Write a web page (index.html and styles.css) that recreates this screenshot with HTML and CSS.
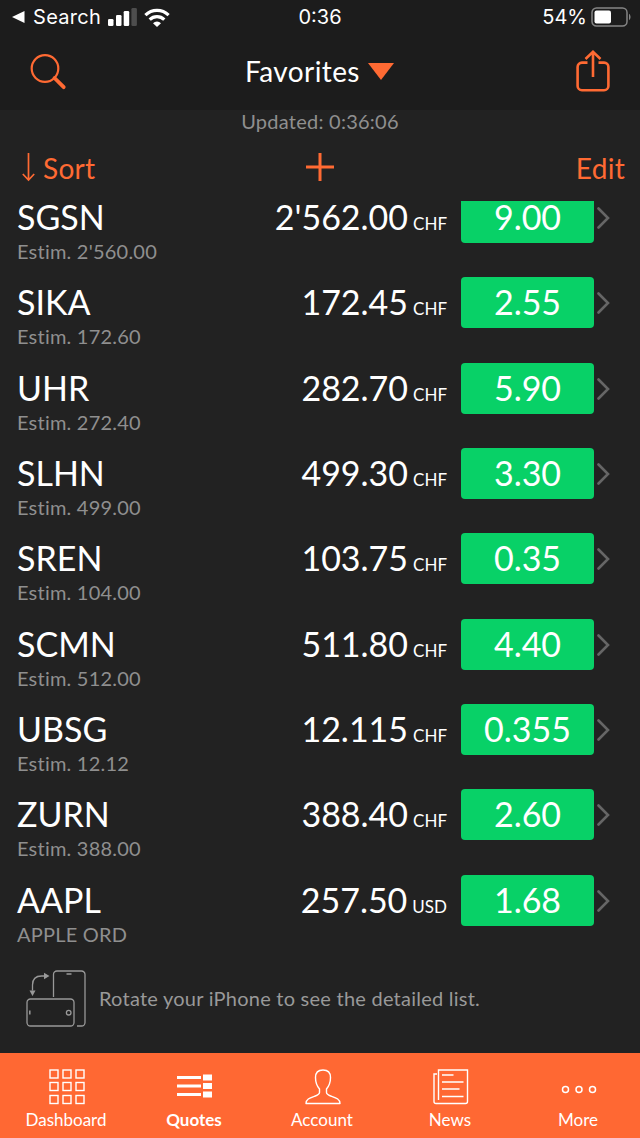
FILE: index.html
```html
<!DOCTYPE html>
<html lang="en">
<head>
  <meta charset="utf-8">
  <title>Favorites</title>
  <link rel="stylesheet" href="styles.css">
</head>
<body>
  <header class="top">
    <div class="status">
      <div class="status-left">
        <svg width="13" height="14" viewBox="0 0 13 14"><path d="M12.5 1v12L0 7z" fill="#fff"/></svg>
        <span class="back-app">Search</span>
        <svg class="signal" width="29" height="18" viewBox="0 0 29 18">
          <g fill="#fff">
            <rect x="0" y="11" width="5.5" height="7" rx="1.3"/>
            <rect x="8" y="7" width="5.5" height="11" rx="1.3"/>
            <rect x="15.7" y="3" width="5.5" height="15" rx="1.3"/>
          </g>
          <rect x="23.4" y="0" width="5.5" height="18" rx="1.3" fill="#4d4d4d"/>
        </svg>
        <svg class="wifi" width="26" height="19" viewBox="0 0 26 19" fill="none" stroke="#fff" stroke-width="3.2">
          <path d="M1.4 7.2a16.6 16.6 0 0 1 23.2 0"/>
          <path d="M5.7 11.6a10.4 10.4 0 0 1 14.6 0"/>
          <path d="M9 15.2a5.8 5.8 0 0 1 8 0l-4 3.8z" fill="#fff" stroke="none"/>
        </svg>
      </div>
      <span class="clock">0:36</span>
      <div class="status-right">
        <span class="percent">54%</span>
        <svg width="38" height="20" viewBox="0 0 38 20">
          <rect x="1" y="1" width="35" height="18" rx="4.5" fill="none" stroke="#858585" stroke-width="1.5"/>
          <rect x="3.5" y="3.5" width="16.5" height="13" rx="2" fill="#fff"/>
        </svg>
        <svg class="battery-tip" width="2" height="8" viewBox="0 0 2 8"><path d="M0 .8c2 1.400 2 5 0 6.400z" fill="#858585"/></svg>
      </div>
    </div>
    <nav class="navbar">
      <svg width="37" height="37" viewBox="0 0 37 37" fill="none" stroke="#ff6a33">
        <circle cx="15" cy="14.500" r="13.300" stroke-width="2.200"/>
        <path d="M24.500 24l9.200 9.200" stroke-width="3.800" stroke-linecap="round"/>
      </svg>
      <div class="title">
        <span>Favorites</span>
        <svg width="26" height="17" viewBox="0 0 26 17"><path d="M0 0h26L13 17z" fill="#ff6a33"/></svg>
      </div>
      <svg class="share" width="34" height="42" viewBox="0 0 34 42" fill="none" stroke="#ff6a33" stroke-width="2.600">
        <path d="M11.500 12.600H6a4.300 4.300 0 0 0-4.400 4.300v19a4.300 4.300 0 0 0 4.300 4.300h22.200a4.300 4.300 0 0 0 4.300-4.300v-19a4.300 4.300 0 0 0-4.300-4.300h-5.600"/>
        <path d="M17 27V2M9.500 9L17 1.800 24.500 9"/>
      </svg>
    </nav>
  </header>

  <div class="updated">Updated: 0:36:06</div>
  <div class="toolbar">
    <a class="sort">
      <svg width="13" height="29" viewBox="0 0 13 29" fill="none" stroke="#ff6a33" stroke-width="1.700"><path d="M6.500 0v27M.8 21l5.700 6 5.700-6"/></svg>
      <span>Sort</span>
    </a>
    <svg class="add" width="28" height="28" viewBox="0 0 28 28"><path d="M14 0v28M0 14h28" stroke="#ff6a33" stroke-width="3"/></svg>
    <a class="edit">Edit</a>
  </div>

  <main class="quotes">
    <ul class="list" id="list"></ul>
  </main>

  <div class="hint">
    <svg width="60" height="58" viewBox="0 0 60 58" fill="none" stroke="#999" stroke-width="1.300">
      <path d="M27.500 27V4.500a3.500 3.500 0 0 1 3.500-3.500h24.500a3.500 3.500 0 0 1 3.500 3.500v48a3.500 3.500 0 0 1-3.500 3.500H51"/>
      <rect x="1" y="29" width="47" height="27" rx="3.500"/>
      <path d="M40.500 4h5M3.800 40.500v4" stroke-width="1.500"/>
      <circle cx="42.700" cy="42.700" r="2.300"/>
      <path d="M6.500 20.500V15c0-6 3.500-9 9-9H18"/>
      <path d="M3.500 20.500h6L6.500 26zM18 2.800v6.400L23.500 6z" fill="#999" stroke="none"/>
    </svg>
    <span>Rotate your iPhone to see the detailed list.</span>
  </div>

  <footer class="tabs">
    <a class="tab">
      <svg width="36" height="36" viewBox="0 0 36 36" fill="none" stroke="#fff" stroke-width="1.400">
        <rect x="1" y="1" width="8" height="8"/><rect x="14" y="1" width="8" height="8"/><rect x="27" y="1" width="8" height="8"/>
        <rect x="1" y="13.500" width="8" height="8"/><rect x="14" y="13.500" width="8" height="8"/><rect x="27" y="13.500" width="8" height="8"/>
        <rect x="1" y="26.500" width="8" height="8"/><rect x="14" y="26.500" width="8" height="8"/><rect x="27" y="26.500" width="8" height="8"/>
      </svg>
      <span>Dashboard</span>
    </a>
    <a class="tab active">
      <svg width="36" height="36" viewBox="0 0 36 36" fill="#fff">
        <path d="M0 7h24v3H0zM0 15.500h24v3H0zM0 24h24v3H0zM26 5.500h9v6h-9zM26 14h9v6h-9zM26 22.500h9v6h-9z"/>
      </svg>
      <span>Quotes</span>
    </a>
    <a class="tab">
      <svg width="36" height="36" viewBox="0 0 36 36" fill="none" stroke="#fff" stroke-width="1.400" stroke-linejoin="round">
        <path d="M18 1c-5 0-7.500 3-7.500 7.500 0 5 1 8 4 11.500v3.500c0 2-2 2.700-5 3.800-5 1.800-8.500 3-8.500 7.200h34c0-4.200-3.500-5.400-8.500-7.200-3-1.100-5-1.800-5-3.800V20c3-3.500 4-6.500 4-11.500C25.500 4 23 1 18 1z"/>
      </svg>
      <span>Account</span>
    </a>
    <a class="tab">
      <svg width="36" height="36" viewBox="0 0 36 36" fill="none" stroke="#fff" stroke-width="1.400">
        <path d="M5.500 31V1h29v31.500c0 1.300-.7 2-2 2H3c-1.300 0-2-.7-2-2V5h3"/>
        <path d="M9 6h11.500M9 13h21.500M9 20h17.500M9 27.500h21.500"/>
      </svg>
      <span>News</span>
    </a>
    <a class="tab">
      <svg width="36" height="36" viewBox="0 0 36 36" fill="none" stroke="#fff" stroke-width="1.500">
        <circle cx="4.500" cy="20.500" r="3"/><circle cx="18" cy="20.500" r="3"/><circle cx="31.500" cy="20.500" r="3"/>
      </svg>
      <span>More</span>
    </a>
  </footer>

  <script src="script.js"></script>
</body>
</html>
```

FILE: styles.css
```css
* {
  box-sizing: border-box;
}
body {
  margin: 0;
  width: 640px;
  height: 1138px;
  display: flex;
  flex-direction: column;
  overflow: hidden;
  background: #222;
  color: #fff;
  font-family: Lato, sans-serif;
}
svg {
  display: block;
  flex: none;
}
.top {
  height: 110px;
  flex: none;
  background: #1c1c1c;
}

/* status bar */
.status {
  height: 34px;
  display: grid;
  grid-template-columns: 1fr auto 1fr;
  align-items: center;
  padding: 0 9px 0 12px;
  font: 20px/34px Inter, sans-serif;
}
.status-left,
.status-right {
  display: flex;
  align-items: center;
}
.status-right {
  justify-content: flex-end;
  gap: 4px;
}
.clock {
  margin-right: 3px;
}
.battery-tip {
  margin-left: -4px;
}
.back-app {
  margin: 0 7px 0 8px;
  letter-spacing: 0.3px;
}
.wifi {
  margin-left: 7px;
}
.navbar {
  height: 76px;
  display: flex;
  justify-content: space-between;
  align-items: center;
  padding: 0 30px;
}
.title {
  display: flex;
  align-items: center;
  gap: 8px;
  margin-right: 4px;
  padding-bottom: 2px;
  font-size: 28px;
  letter-spacing: 0.4px;
}
.share {
  margin-bottom: 2px;
}

.updated {
  flex: none;
  height: 24px;
  line-height: 22px;
  text-align: center;
  font-size: 20px;
  letter-spacing: 0.25px;
  color: #8f8f8f;
}
.toolbar {
  flex: none;
  height: 67px;
  display: grid;
  grid-template-columns: 1fr auto 1fr;
  align-items: center;
  padding: 0 15px;
  color: #ff6a33;
  font-size: 28px;
  line-height: 32px;
}
.sort {
  display: flex;
  align-items: center;
  gap: 8px;
  padding-left: 7px;
  letter-spacing: 0.3px;
}
.add {
  margin-bottom: 2px;
}
.edit {
  text-align: right;
  letter-spacing: 0.3px;
}

/* quote list, scrolled a little under the toolbar */
.quotes {
  height: 759px;
  flex: none;
  overflow: hidden;
}
.list {
  list-style: none;
  margin: -9.1px 0 0;
  padding: 0;
}
.row {
  height: 85.33px;
  display: flex;
  align-items: flex-start;
  padding-left: 17px;
}
.name {
  flex: 1;
}
.symbol {
  font-size: 34px;
  line-height: 50px;
}
.sub {
  font-size: 20px;
  line-height: 24px;
  margin-top: -3px;
  color: #8f8f8f;
  letter-spacing: 0.22px;
}
.price {
  font-size: 34px;
  line-height: 50px;
}
.currency {
  font-size: 17px;
  margin-left: 5px;
}
.change {
  width: 133px;
  height: 51px;
  margin: 0 3px 0 14px;
  border-radius: 4px;
  background: #08d167;
  font-size: 34px;
  line-height: 50px;
  text-align: center;
}
.chevron {
  margin: 15px 30px 0 0;
}

.hint {
  flex: none;
  height: 93px;
  display: flex;
  align-items: flex-start;
  gap: 13px;
  padding: 10px 0 0 26px;
  color: #999;
  font-size: 20px;
  line-height: 57px;
  letter-spacing: 0.24px;
}

/* tab bar */
.tabs {
  height: 85px;
  flex: none;
  display: flex;
  padding-left: 2px;
  background: #ff6833;
}
.tab {
  width: 128px;
  flex: none;
  display: flex;
  flex-direction: column;
  align-items: center;
  padding-top: 16px;
  font-size: 17px;
  line-height: 22px;
}
.tab svg {
  margin-left: 1px;
}
.tab span {
  margin-top: 4px;
}
.active {
  font-weight: bold;
}
```

FILE: script.js
```js
const quotes = [
  ["SGSN", "Estim. 2'560.00", "2'562.00", "CHF", "9.00"],
  ["SIKA", "Estim. 172.60", "172.45", "CHF", "2.55"],
  ["UHR", "Estim. 272.40", "282.70", "CHF", "5.90"],
  ["SLHN", "Estim. 499.00", "499.30", "CHF", "3.30"],
  ["SREN", "Estim. 104.00", "103.75", "CHF", "0.35"],
  ["SCMN", "Estim. 512.00", "511.80", "CHF", "4.40"],
  ["UBSG", "Estim. 12.12", "12.115", "CHF", "0.355"],
  ["ZURN", "Estim. 388.00", "388.40", "CHF", "2.60"],
  ["AAPL", "APPLE ORD", "257.50", "USD", "1.68"]
];

document.getElementById('list').innerHTML = quotes.map(([symbol, sub, price, currency, change]) => `
  <li class="row">
    <div class="name">
      <div class="symbol">${symbol}</div>
      <div class="sub">${sub}</div>
    </div>
    <div class="price">${price}<span class="currency">${currency}</span></div>
    <div class="change">${change}</div>
    <svg class="chevron" width="13" height="22" viewBox="0 0 13 22"><path d="M1.500 1.500l9.500 9.500-9.500 9.500" fill="none" stroke="#666" stroke-width="2.600" stroke-linecap="round"/></svg>
  </li>`).join('');
```
